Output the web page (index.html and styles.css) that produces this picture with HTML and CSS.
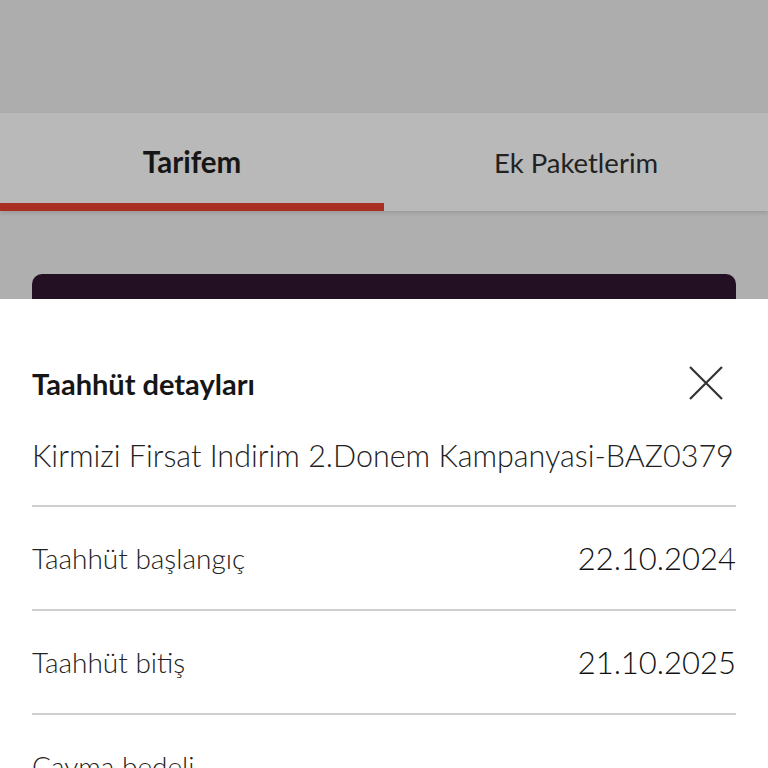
FILE: index.html
```html
<!DOCTYPE html>
<html lang="tr">
<head>
    <meta charset="UTF-8">
    <title>Taahhüt detayları</title>
    <link rel="stylesheet" href="styles.css">
</head>
<body>
    <div class="app">
        <div class="topbar"></div>
        <div class="tabs">
            <div class="tab active">Tarifem</div>
            <div class="tab">Ek Paketlerim</div>
        </div>
        <div class="content">
            <div class="card"></div>
        </div>
        <div class="sheet">
            <div class="sheet-head">
                <h2 class="tit">Taahhüt detayları</h2>
                <button class="close" aria-label="Kapat">
                    <svg width="36" height="36" viewBox="0 0 36 36">
                        <path d="M2 2 L34 34 M34 2 L2 34" stroke="#333" stroke-width="2.2" fill="none"/>
                    </svg>
                </button>
            </div>
            <p class="campaign">Kirmizi Firsat Indirim 2.Donem Kampanyasi-BAZ0379</p>
            <div class="row">
                <span class="label">Taahhüt başlangıç</span>
                <span class="value">22.10.2024</span>
            </div>
            <div class="row">
                <span class="label">Taahhüt bitiş</span>
                <span class="value">21.10.2025</span>
            </div>
            <div class="row">
                <span class="label">Cayma bedeli</span>
                <span class="value"></span>
            </div>
        </div>
    </div>
</body>
</html>
```

FILE: styles.css
```css
html {
    font-size: 16px;
}
body {
    margin: 0;
    background: #fff;
    font-family: Lato, "Open Sans", sans-serif;
    color: #222;
}
.app {
    width: 768px;
    height: 768px;
    overflow: hidden;
    display: flex;
    flex-direction: column;
}
.topbar {
    height: 113px;
    background: #adadad;
    flex-shrink: 0;
}
.tabs {
    height: 98px;
    display: flex;
    background: #b9b9b9;
    box-shadow: 0 2px 4px rgba(0,0,0,0.12);
    position: relative;
    flex-shrink: 0;
}
.tab {
    flex: 1;
    display: flex;
    align-items: center;
    justify-content: center;
    padding-bottom: 0;
    font-size: 27.5px;
    font-weight: 400;
    color: #222;
    box-sizing: border-box;
}
.tab.active {
    font-size: 29.5px;
    font-weight: 700;
    color: #161616;
    border-bottom: 8px solid #a82f22;
    padding-top: 6px;
}
.content {
    height: 88px;
    background: #afafaf;
    padding: 63px 32px 0;
    box-sizing: border-box;
    overflow: hidden;
    flex-shrink: 0;
}
.card {
    height: 60px;
    background: #231022;
    border-radius: 10px;
}
.sheet {
    flex: 1;
    background: #fff;
    padding: 54px 32px 0;
}
.sheet-head {
    display: flex;
    align-items: center;
    justify-content: space-between;
    height: 60px;
}
.tit {
    margin: 0;
    font-size: 29px;
    font-weight: 700;
    color: #161616;
}
.close {
    border: none;
    background: none;
    padding: 0;
    width: 36px;
    height: 36px;
    margin-right: 12px;
    cursor: pointer;
}
.campaign {
    margin: 22px 0 0;
    line-height: 40px;
    padding-bottom: 30px;
    font-size: 30.5px;
    font-weight: 300;
    white-space: nowrap;
    color: #222;
    border-bottom: 2px solid #cfcfcf;
}
.row {
    height: 102px;
    display: flex;
    align-items: center;
    justify-content: space-between;
    border-bottom: 2px solid #cfcfcf;
}
.label {
    font-size: 28px;
    font-weight: 300;
    color: #222;
}
.value {
    font-size: 31px;
    font-weight: 300;
    color: #111;
}
```
